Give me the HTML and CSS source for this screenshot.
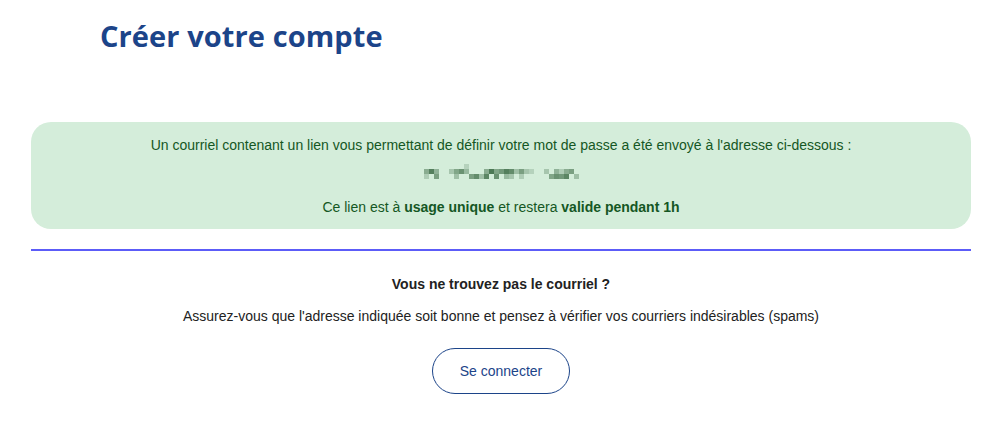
FILE: index.html
```html
<!DOCTYPE html>
<html lang="fr">
<head>
  <meta charset="UTF-8">
  <meta name="viewport" content="width=device-width, initial-scale=1.0">
  <title>Créer votre compte</title>
  <link rel="stylesheet" href="styles.css">
</head>
<body>
  <div class="page">
    <h1 class="title">Créer votre compte</h1>

    <!-- Confirmation message -->
    <div class="alert">
      <p>Un courriel contenant un lien vous permettant de définir votre mot de passe a été envoyé à l'adresse ci-dessous :</p>
      <div class="email" aria-label="adresse masquée">
        <svg width="155" height="15" viewBox="0 0 155 15">
          <g fill="#3d6b46">
            <rect x="0" y="5" width="5" height="5" opacity=".5"/>
            <rect x="0" y="10" width="5" height="5" opacity=".25"/>
            <rect x="5" y="5" width="5" height="5" opacity=".85"/>
            <rect x="10" y="5" width="5" height="5" opacity=".45"/>
            <rect x="10" y="10" width="5" height="5" opacity=".6"/>
            <rect x="25" y="5" width="5" height="5" opacity=".3"/>
            <rect x="30" y="5" width="5" height="5" opacity=".55"/>
            <rect x="30" y="10" width="5" height="5" opacity=".35"/>
            <rect x="35" y="5" width="5" height="5" opacity=".7"/>
            <rect x="40" y="0" width="5" height="5" opacity=".2"/>
            <rect x="40" y="5" width="5" height="5" opacity=".4"/>
            <rect x="45" y="10" width="5" height="5" opacity=".6"/>
            <rect x="50" y="10" width="5" height="5" opacity=".75"/>
            <rect x="55" y="10" width="5" height="5" opacity=".35"/>
            <rect x="60" y="5" width="5" height="5" opacity=".5"/>
            <rect x="60" y="10" width="5" height="5" opacity=".8"/>
            <rect x="65" y="5" width="5" height="5" opacity=".9"/>
            <rect x="70" y="5" width="5" height="5" opacity=".55"/>
            <rect x="70" y="10" width="5" height="5" opacity=".7"/>
            <rect x="75" y="5" width="5" height="5" opacity=".65"/>
            <rect x="80" y="5" width="5" height="5" opacity=".85"/>
            <rect x="80" y="10" width="5" height="5" opacity=".4"/>
            <rect x="85" y="5" width="5" height="5" opacity=".75"/>
            <rect x="85" y="10" width="5" height="5" opacity=".3"/>
            <rect x="90" y="5" width="5" height="5" opacity=".35"/>
            <rect x="95" y="5" width="5" height="5" opacity=".6"/>
            <rect x="95" y="10" width="5" height="5" opacity=".25"/>
            <rect x="100" y="5" width="5" height="5" opacity=".3"/>
            <rect x="105" y="5" width="5" height="5" opacity=".2"/>
            <rect x="120" y="5" width="5" height="5" opacity=".3"/>
            <rect x="125" y="10" width="5" height="5" opacity=".55"/>
            <rect x="130" y="5" width="5" height="5" opacity=".45"/>
            <rect x="130" y="10" width="5" height="5" opacity=".7"/>
            <rect x="135" y="5" width="5" height="5" opacity=".25"/>
            <rect x="135" y="10" width="5" height="5" opacity=".65"/>
            <rect x="140" y="5" width="5" height="5" opacity=".5"/>
            <rect x="140" y="10" width="5" height="5" opacity=".8"/>
            <rect x="145" y="5" width="5" height="5" opacity=".6"/>
            <rect x="150" y="10" width="5" height="5" opacity=".35"/>
          </g>
        </svg>
      </div>
      <p>Ce lien est à <strong>usage unique</strong> et restera <strong>valide pendant 1h</strong></p>
    </div>

    <div class="divider"></div>

    <div class="help">
      <p class="help-title">Vous ne trouvez pas le courriel ?</p>
      <p>Assurez-vous que l'adresse indiquée soit bonne et pensez à vérifier vos courriers indésirables (spams)</p>
      <a href="#" class="button">Se connecter</a>
    </div>
  </div>
</body>
</html>
```

FILE: styles.css
```css
:root {
  --blue: #1c4489;
  --green-bg: #d4edda;
  --green-text: #155724;
  --line: #5c5cf8;
}

body {
  margin: 0;
  font-family: 'Liberation Sans', Arial, sans-serif;
  font-size: 14px;
  color: #222;
  background: #fff;
}

.page {
  padding: 0 29px 0 31px;
}

.title {
  margin: 16px 0 0 69px;
  font-family: 'Open Sans', 'Liberation Sans', sans-serif;
  font-weight: 700;
  font-size: 29px;
  line-height: 40px;
  letter-spacing: 0.1px;
  color: var(--blue);
}

.alert {
  margin-top: 66px;
  background-color: var(--green-bg);
  color: var(--green-text);
  border-radius: 20px;
  padding: 14px 20px 13px;
  text-align: center;
}

.alert p {
  margin: 0;
  line-height: 18px;
}

.email {
  display: flex;
  justify-content: center;
  padding: 10px 0 19px;
}

.email svg {
  display: block;
}

.divider {
  height: 1.5px;
  background-color: var(--line);
  margin-top: 20px;
}

.help {
  text-align: center;
  padding-top: 25px;
}

.help p {
  margin: 0 0 17px;
  line-height: 16px;
}

.help .help-title {
  font-weight: 700;
  margin-bottom: 16px;
}

.button {
  display: inline-block;
  margin-top: 7px;
  width: 136px;
  height: 44px;
  line-height: 44px;
  border: 1px solid var(--blue);
  border-radius: 23px;
  color: var(--blue);
  text-decoration: none;
  font-size: 14px;
}
```
